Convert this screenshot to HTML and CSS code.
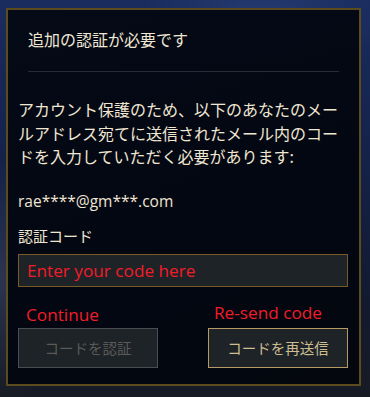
FILE: index.html
```html
<!DOCTYPE html>
<html lang="ja">
<head>
<meta charset="utf-8">
<link rel="stylesheet" href="styles.css">
</head>
<body>
<div class="backdrop">
  <section class="panel">
    <header class="panel-head">
      <h1 class="title">追加の認証が必要です</h1>
    </header>
    <div class="panel-body">
      <p class="desc">アカウント保護のため、以下のあなたのメールアドレス宛てに送信されたメール内のコードを入力していただく必要があります:</p>
      <p class="email">rae****@gm***.com</p>
      <label class="field-label" for="code">認証コード</label>
      <input id="code" class="code-input" type="text" placeholder="Enter your code here">
      <div class="actions">
        <div class="action">
          <span class="note note-left">Continue</span>
          <button class="btn btn-disabled" type="button">コードを認証</button>
        </div>
        <div class="action">
          <span class="note note-right">Re-send code</span>
          <button class="btn btn-gold" type="button">コードを再送信</button>
        </div>
      </div>
    </div>
  </section>
</div>
</body>
</html>
```

FILE: styles.css
```css
html, body {
  margin: 0;
  padding: 0;
}
body {
  width: 370px;
  height: 397px;
  overflow: hidden;
  font-family: "Noto Sans CJK JP", "Open Sans", sans-serif;
}
.backdrop {
  width: 370px;
  height: 397px;
  box-sizing: border-box;
  padding: 8px 0 0 6px;
  background:
    radial-gradient(ellipse 120px 60px at 260px 20px, rgba(60, 90, 150, 0.35), transparent),
    radial-gradient(ellipse 80px 120px at 0px 280px, rgba(90, 100, 130, 0.35), transparent),
    linear-gradient(180deg, #1a2c5e 0%, #14224a 40%, #121a30 75%, #171b24 100%);
}
.panel {
  width: 355px;
  height: 378px;
  box-sizing: border-box;
  border: 2px solid #5c4b1d;
  background: linear-gradient(160deg, #040a16 0%, #030712 60%, #04070e 100%);
  display: flex;
  flex-direction: column;
}
.panel-head {
  margin: 0 20px;
  padding-top: 17px;
  padding-bottom: 20px;
  border-bottom: 1px solid #262c35;
}
.title {
  margin: 0;
  font-size: 16px;
  font-weight: 400;
  line-height: 24px;
  color: #f0e6d2;
}
.panel-body {
  padding: 26px 11px 0 10px;
  display: flex;
  flex-direction: column;
}
.desc {
  margin: 0;
  font-size: 16px;
  line-height: 23.5px;
  color: #f0e6d2;
}
.email {
  margin: 21px 0 0;
  font-family: "Open Sans", sans-serif;
  font-size: 15.5px;
  line-height: 22px;
  color: #f0e6d2;
}
.field-label {
  margin-top: 14px;
  font-size: 15px;
  line-height: 20px;
  color: #f0e6d2;
}
.code-input {
  margin-top: 8px;
  width: 330px;
  height: 33px;
  box-sizing: border-box;
  border: 1px solid #785a28;
  background: #1e2328;
  padding: 0 8px;
  font-family: "Open Sans", sans-serif;
  font-size: 17.2px;
  color: #f0e6d2;
  outline: none;
}
.code-input::placeholder {
  color: #f21c28;
  opacity: 1;
}
.actions {
  display: flex;
  justify-content: space-between;
  width: 330px;
  margin-top: 15px;
}
.action {
  display: flex;
  flex-direction: column;
  width: 140px;
}
.note {
  font-family: "Open Sans", sans-serif;
  font-size: 17.2px;
  line-height: 24px;
  color: #f21c28;
}
.note-left {
  padding-left: 8px;
  margin-top: 1px;
  height: 25px;
}
.note-right {
  padding-left: 6px;
  margin-top: -1px;
  height: 27px;
}
.btn {
  width: 140px;
  height: 40px;
  box-sizing: border-box;
  background: #1e2328;
  font-family: "Noto Sans CJK JP", sans-serif;
  font-size: 14.5px;
  padding: 0;
  cursor: pointer;
}
.btn-disabled {
  border: 1px solid #4a4e52;
  color: #5b5a56;
}
.btn-gold {
  border: 1px solid #b59b63;
  color: #cdbe91;
}
```
